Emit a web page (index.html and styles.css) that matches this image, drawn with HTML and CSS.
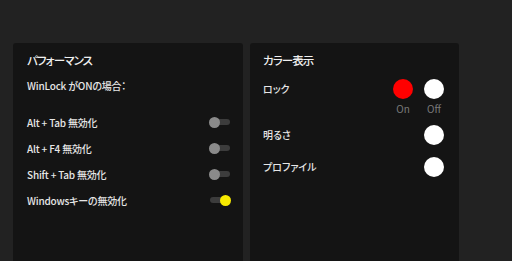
FILE: index.html
```html
<!DOCTYPE html>
<html lang="ja">
<head>
<meta charset="utf-8">
<link rel="stylesheet" href="styles.css">
</head>
<body>
<div class="page">
  <section class="panel perf">
    <h2 class="title">パフォーマンス</h2>
    <p class="sub">WinLock がONの場合：</p>
    <div class="rows">
      <div class="row"><span>Alt + Tab 無効化</span><span class="toggle"><span class="knob"></span></span></div>
      <div class="row"><span>Alt + F4 無効化</span><span class="toggle"><span class="knob"></span></span></div>
      <div class="row"><span>Shift + Tab 無効化</span><span class="toggle"><span class="knob"></span></span></div>
      <div class="row"><span>Windowsキーの無効化</span><span class="toggle on"><span class="knob"></span></span></div>
    </div>
  </section>
  <section class="panel color">
    <h2 class="title">カラー表示</h2>
    <div class="crow first">
      <span class="clabel">ロック</span>
      <div class="swatches">
        <div class="sw"><span class="dot red"></span><span class="cap">On</span></div>
        <div class="sw"><span class="dot white"></span><span class="cap">Off</span></div>
      </div>
    </div>
    <div class="crow second">
      <span class="clabel">明るさ</span>
      <span class="dot white"></span>
    </div>
    <div class="crow third">
      <span class="clabel">プロファイル</span>
      <span class="dot white"></span>
    </div>
  </section>
</div>
</body>
</html>
```
FILE: styles.css
```css
html, body {
  margin: 0;
  padding: 0;
  background: #222222;
  height: 100%;
  overflow: hidden;
}
body {
  font-family: "Noto Sans CJK JP", "Noto Sans", sans-serif;
  font-feature-settings: "palt";
  color: #e6e6e6;
}
.page {
  display: flex;
  gap: 7px;
  padding: 43px 0 0 13px;
  height: 218px;
}
.panel {
  background: #141414;
  border-radius: 3px 3px 0 0;
  box-sizing: border-box;
}
.perf {
  width: 230px;
  padding: 0 13px 0 14px;
}
.color {
  width: 209px;
  padding: 0 15px 0 13px;
}
.title {
  margin: 7px 0 0;
  height: 20px;
  line-height: 20px;
  font-size: 11.5px;
  font-weight: 500;
  letter-spacing: -0.9px;
  color: #f0f0f0;
}
.sub {
  margin: 6px 0 0;
  height: 20px;
  line-height: 20px;
  font-size: 10px;
  font-weight: 500;
  letter-spacing: -0.2px;
}
.rows {
  margin-top: 13px;
}
.row {
  height: 26px;
  display: flex;
  align-items: center;
  justify-content: space-between;
  font-size: 10px;
  font-weight: 500;
  letter-spacing: -0.2px;
}
.toggle {
  position: relative;
  width: 20px;
  height: 6px;
  border-radius: 3px;
  background: #3c3c3c;
}
.knob {
  position: absolute;
  left: -1px;
  top: -2.5px;
  width: 11px;
  height: 11px;
  border-radius: 50%;
  background: #8a8a8a;
}
.toggle.on .knob {
  left: 10px;
  background: #f7ea00;
}
.crow {
  display: flex;
  justify-content: space-between;
  align-items: flex-start;
  font-size: 10px;
  font-weight: 500;
}
.crow.first { margin-top: 9px; }
.crow.second { margin-top: 10px; }
.crow.third { margin-top: 12px; }
.clabel {
  line-height: 20px;
}
.swatches {
  display: flex;
  gap: 11px;
}
.sw {
  display: flex;
  flex-direction: column;
  align-items: center;
}
.dot {
  width: 20px;
  height: 20px;
  border-radius: 50%;
  display: block;
}
.dot.red { background: #ff0000; }
.dot.white { background: #ffffff; }
.cap {
  margin-top: 4px;
  line-height: 12px;
  font-size: 10px;
  font-weight: normal;
  color: #7a7a7a;
}
```
